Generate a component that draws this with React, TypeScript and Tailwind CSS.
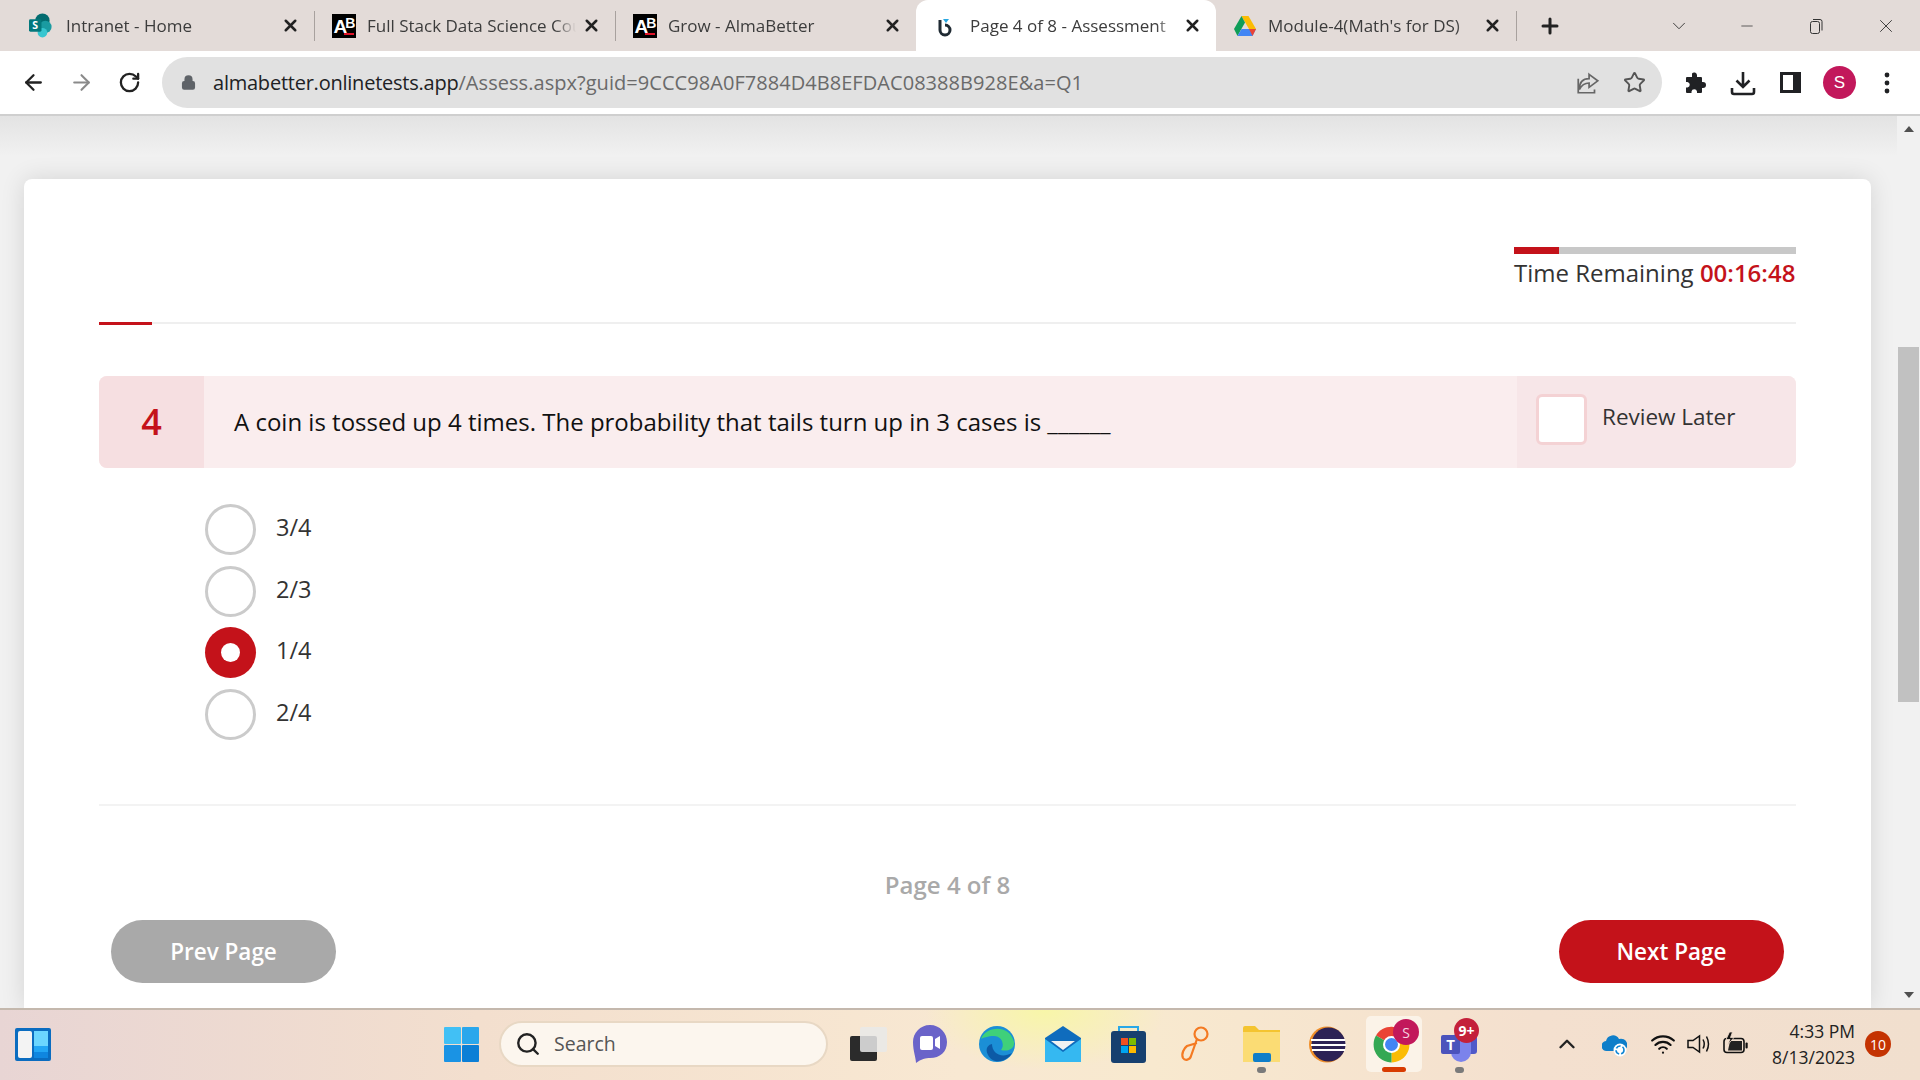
import { ReactNode } from 'react';
import { ArrowLeft, ArrowRight, RotateCw, Lock, Star, Plus, X, ChevronDown, ChevronUp, Minus, Search, Wifi } from 'lucide-react';

const SharePointIcon = () => (
  <svg width="25" height="25" viewBox="0 0 25 25">
    <circle cx="14" cy="7.5" r="7.5" fill="#036c70" />
    <circle cx="17" cy="14" r="6.5" fill="#1a9ba1" />
    <circle cx="14" cy="20" r="5" fill="#37c6d0" />
    <rect x="0" y="6" width="13" height="13" rx="1.5" fill="#03787c" />
    <text x="6.5" y="16.5" fontSize="11" fontWeight="700" fill="#fff" textAnchor="middle" fontFamily="Open Sans">S</text>
  </svg>
);

const AbIcon = () => (
  <div className="w-6 h-6 ml-[3px] shrink-0 bg-black relative flex items-start pl-[2px] font-['Liberation_Sans',sans-serif] font-bold text-white">
    <span className="text-[19px] leading-[25px]">A</span>
    <span className="text-[14px] leading-[15px] -ml-[2px] mt-[2px]">B</span>
    <div className="absolute right-[2px] bottom-[3px] w-[10px] h-[2px] bg-[#e0142a]" />
  </div>
);

const BingIcon = () => (
  <svg width="24" height="24" viewBox="0 0 24 24">
    <path d="M7 6 V16 a5 5 0 1 0 5-5" fill="none" stroke="#1f2a33" strokeWidth="3" />
    <path d="M10 5 l6 0 -3 4 z" fill="#2aa7e0" />
  </svg>
);

const DriveIcon = () => (
  <svg width="22" height="20" viewBox="0 0 22 20" className="ml-[4px] shrink-0">
    <path d="M7.5 0 H14.5 L22 13 H15 Z" fill="#fbbc04" />
    <path d="M7.5 0 L0 13 L3.5 20 L11 6.5 Z" fill="#0f9d58" />
    <path d="M3.5 20 H18.5 L22 13 H7.5 Z" fill="#4285f4" />
    <path d="M15 13 H22 L18.5 20 Z" fill="#ea4335" />
  </svg>
);

const tabs = [
  { title: 'Intranet - Home', icon: <SharePointIcon /> },
  { title: 'Full Stack Data Science Course', icon: <AbIcon /> },
  { title: 'Grow - AlmaBetter', icon: <AbIcon /> },
  { title: 'Page 4 of 8 - Assessment', icon: <BingIcon />, active: true },
  { title: "Module-4(Math's for DS)", icon: <DriveIcon /> },
];

const Tab = ({ title, icon, active }: { title: string; icon: ReactNode; active?: boolean }) => (
  <div className={active ? 'w-[300px] h-[51px] shrink-0 flex items-center pl-[17px] pr-[14px] bg-white rounded-t-[12px]' : 'w-[300px] h-[51px] shrink-0 flex items-center pl-[15px] pr-[14px]'}>
    <div className="w-[24px] h-[25px] flex items-center justify-center shrink-0">{icon}</div>
    <div className="flex-1 ml-[13px] min-w-0 overflow-hidden whitespace-nowrap text-[17px] text-[#3c3c3c] [mask-image:linear-gradient(to_right,black_90%,transparent)]">{title}</div>
    <X size={19} strokeWidth={3.2} className="ml-[6px] shrink-0 text-[#222]" />
  </div>
);

const Sep = () => <div className="w-px h-[30px] shrink-0 bg-[#a8a19e]" />;

const TabStrip = () => (
  <div className="h-[51px] bg-[#e3dbd8] flex items-center pl-[14px] shrink-0">
    <Tab {...tabs[0]} />
    <Sep />
    <Tab {...tabs[1]} />
    <Sep />
    <Tab {...tabs[2]} />
    <Tab {...tabs[3]} />
    <Tab {...tabs[4]} />
    <Sep />
    <Plus size={24} strokeWidth={3} className="ml-[21px] text-[#222]" />
    <ChevronDown size={22} strokeWidth={1} className="ml-[106px] text-[#333]" />
    <Minus size={18} strokeWidth={1} className="ml-[48px] text-[#333]" />
    <svg width="16" height="16" viewBox="0 0 16 16" className="ml-[52px]" fill="none" stroke="#333">
      <rect x="2.5" y="3.5" width="9" height="12" rx="2" />
      <path d="M5 1.5 h7 a2 2 0 0 1 2 2 v9" />
    </svg>
    <X size={22} strokeWidth={1} className="ml-[51px] text-[#333]" />
  </div>
);

const Toolbar = () => (
  <div className="h-[65px] bg-white border-b-2 border-[#cfcfcf] flex items-center shrink-0 text-[#222]">
    <ArrowLeft size={25} strokeWidth={2.2} className="ml-[21px]" />
    <ArrowRight size={25} strokeWidth={2} className="ml-[23px] text-[#8a8a8a]" />
    <RotateCw size={23} strokeWidth={2.4} className="ml-[24px]" />
    <div className="ml-[21px] w-[1500px] h-[51px] rounded-full bg-[#e1e1e1] flex items-center pl-[19px] pr-[16px]">
      <Lock size={15} strokeWidth={3} className="text-[#5f6368] fill-[#5f6368]" />
      <div className="ml-[17px] text-[20px] whitespace-nowrap text-[#6a6a6a] tracking-[0.05px]">
        <span className="text-[#202124] tracking-[-0.23px]">almabetter.onlinetests.app</span>/Assess.aspx?guid=9CCC98A0F7884D4B8EFDAC08388B928E&amp;a=Q1
      </div>
      <svg width="26" height="26" viewBox="0 0 24 24" className="ml-auto" fill="none" stroke="#666" strokeWidth="1.6">
        <path d="M13 4 l8 6 -8 6 v-4 c-4 0 -7 2 -9 6 c0 -6 3 -10 9 -10 z" />
        <path d="M3 8 v13 h15 v-3" />
      </svg>
      <Star size={23} strokeWidth={2} className="ml-[22px] text-[#555]" />
    </div>
    <svg width="22" height="22" viewBox="0 0 22 22" className="ml-[22px]" fill="#202124">
      <path d="M8 1.5 a2.8 2.8 0 0 1 5 1.5 V5 h4 a1 1 0 0 1 1 1 v4 h1 a3 3 0 0 1 0 6 h-1 v4 a1 1 0 0 1 -1 1 h-4 v-1.5 a2.8 2.8 0 0 0 -5.5 0 V21 H3 a1 1 0 0 1 -1 -1 v-4.5 h1.5 a2.8 2.8 0 0 0 0 -5.5 H2 V6 a1 1 0 0 1 1 -1 h5 V3 z" />
    </svg>
    <svg width="26" height="26" viewBox="0 0 26 26" className="ml-[24px]" fill="none" stroke="#202124" strokeWidth="2.6">
      <path d="M13 2 V17 M6.5 10.5 L13 17 L19.5 10.5" />
      <path d="M2 18 V22 Q2 24 4 24 H22 Q24 24 24 22 V18" />
    </svg>
    <div className="ml-[24px] w-[21px] h-[21px] border-[3px] border-[#202124] border-r-[8px]" />
    <div className="ml-[22px] w-[33px] h-[33px] rounded-full bg-[#c2185b] text-white text-[17px] font-['Liberation_Sans',sans-serif] flex items-center justify-center">S</div>
    <svg width="6" height="22" viewBox="0 0 6 22" className="ml-[28px]" fill="#202124">
      <circle cx="3" cy="3" r="2.4" />
      <circle cx="3" cy="11" r="2.4" />
      <circle cx="3" cy="19" r="2.4" />
    </svg>
  </div>
);

const options = [
  { label: '3/4' },
  { label: '2/3' },
  { label: '1/4', selected: true },
  { label: '2/4' },
];

const Radio = ({ label, selected }: { label: string; selected?: boolean }) => (
  <div className="h-[51px] flex items-start">
    {selected ? (
      <div className="w-[51px] h-[51px] rounded-full bg-[#c4121a] flex items-center justify-center">
        <div className="w-[19px] h-[19px] rounded-full bg-white" />
      </div>
    ) : (
      <div className="w-[51px] h-[51px] rounded-full border-[3px] border-[#cbcbcb]" />
    )}
    <div className="ml-[20px] text-[23.5px] leading-[46px] text-[#333]">{label}</div>
  </div>
);

const Card = () => (
  <div className="w-[1847px] h-[829px] mt-[63px] ml-[24px] bg-white rounded-t-[8px] shadow-[0_0_24px_rgba(0,0,0,0.12)] px-[75px] overflow-hidden">
    <div className="h-[145px] border-b-2 border-[#efefef] relative flex flex-col items-end">
      <div className="w-[282px] h-[7px] mt-[68px] bg-[#c8c8c8]">
        <div className="w-[45px] h-[7px] bg-[#c4121a]" />
      </div>
      <div className="w-[282px] mt-[1px] text-[24px] leading-[36px] whitespace-nowrap text-[#333]">
        Time Remaining <span className="text-[#c4121a] font-semibold">00:16:48</span>
      </div>
      <div className="absolute left-0 -bottom-[3px] w-[53px] h-[3px] bg-[#c4121a]" />
    </div>
    <div className="mt-[52px] h-[92px] flex rounded-[8px] overflow-hidden bg-[#faedee]">
      <div className="w-[105px] bg-[#f6dfe1] flex items-center justify-center text-[36px] font-semibold text-[#c4121a]">4</div>
      <div className="flex-1 pl-[30px] flex items-center text-[24px] text-[#111]">
        A coin is tossed up 4 times. The probability that tails turn up in 3 cases is ______
      </div>
      <div className="w-[279px] bg-[#f7e6e8] pl-[19px] pt-[18px] flex items-start">
        <div className="w-[51px] h-[51px] rounded-[6px] bg-white border-[3px] border-[#f4d2d4]" />
        <div className="ml-[15px] text-[22.5px] leading-[46px] text-[#333]">Review Later</div>
      </div>
    </div>
    <div className="mt-[36px] ml-[106px] flex flex-col gap-[10.7px]">
      {options.map((o) => (
        <Radio key={o.label} {...o} />
      ))}
    </div>
    <div className="mt-[64px] border-t-2 border-[#f3f3f3]" />
    <div className="mt-[61px] text-center text-[24px] leading-[36px] font-semibold text-[#a9a9a9]">Page 4 of 8</div>
    <div className="mt-[17px] px-[12px] flex justify-between">
      <button className="w-[225px] h-[63px] rounded-full bg-[#a9a9a9] text-white text-[22.5px] font-semibold">Prev Page</button>
      <button className="w-[225px] h-[63px] rounded-full bg-[#c4121a] text-white text-[22.5px] font-semibold">Next Page</button>
    </div>
  </div>
);

const Scrollbar = () => (
  <div className="w-[23px] ml-[26px] bg-[#f1f1f1] flex flex-col items-center shrink-0">
    <div className="mt-[10px] w-0 h-0 border-x-[5px] border-x-transparent border-b-[6px] border-b-[#505050]" />
    <div className="mt-[215px] w-[21px] h-[355px] bg-[#c1c1c1]" />
    <div className="mt-auto mb-[10px] w-0 h-0 border-x-[5px] border-x-transparent border-t-[6px] border-t-[#505050]" />
  </div>
);

const WidgetsIcon = () => (
  <div className="w-[36px] h-[33px] bg-[#0a6cc0] p-[3px] flex gap-[2px] rounded-[2px]">
    <div className="w-[14px] bg-[#f3f3f3] rounded-[2px]" />
    <div className="flex-1 flex flex-col">
      <div className="flex-1 bg-[#6bd6ff]" />
      <div className="h-[6px] bg-[#22a6f5]" />
      <div className="h-[6px] bg-[#0f86e0]" />
    </div>
  </div>
);

const WindowsIcon = () => (
  <svg width="35" height="35" viewBox="0 0 35 35">
    <rect x="0" y="0" width="17" height="17" rx="1" fill="#41c0f5" />
    <rect x="18" y="0" width="17" height="17" rx="1" fill="#2aa7ec" />
    <rect x="0" y="18" width="17" height="17" rx="1" fill="#1a93e4" />
    <rect x="18" y="18" width="17" height="17" rx="1" fill="#0c7fd6" />
  </svg>
);

const TaskViewIcon = () => (
  <svg width="37" height="34" viewBox="0 0 37 34">
    <rect x="0" y="9" width="27" height="25" rx="2" fill="#2b2b2b" />
    <rect x="10" y="0" width="27" height="25" rx="2" fill="#e9e9e9" fillOpacity="0.85" />
  </svg>
);

const ChatIcon = () => (
  <svg width="34" height="38" viewBox="0 0 34 38">
    <path d="M17 0 C27 0 34 8 34 17 C34 27 27 33 17 33 C13 33 8 34 3 38 C3 33 0 26 0 17 C0 8 7 0 17 0 Z" fill="#6a63c9" />
    <rect x="7" y="11" width="13" height="14" rx="2" fill="#fff" />
    <path d="M22 14 l5-3 v13 l-5-3 z" fill="#fff" />
  </svg>
);

const EdgeIcon = () => (
  <svg width="36" height="38" viewBox="0 0 36 38">
    <circle cx="18" cy="19" r="18" fill="#1b8fd6" />
    <path d="M2 14 C6 2 30 -2 35 17 C36 24 28 27 22 25 C26 20 23 11 15 11 C9 11 4 13 2 14 Z" fill="#3fd07a" />
    <path d="M13 19 C13 28 22 34 33 28 C28 37 14 40 9 30 C6 25 8 20 13 19 Z" fill="#0c5aa6" />
  </svg>
);

const MailIcon = () => (
  <svg width="36" height="36" viewBox="0 0 36 36">
    <path d="M0 12 L18 0 L36 12 V36 H0 Z" fill="#0f6cbd" />
    <path d="M0 13 L18 26 L36 13 V36 H0 Z" fill="#35b8f1" />
    <path d="M6 15 H30 L18 24 Z" fill="#f2f2f2" />
  </svg>
);

const StoreIcon = () => (
  <svg width="35" height="37" viewBox="0 0 35 37">
    <path d="M8 6 V1 H27 V6" fill="none" stroke="#29a8e8" strokeWidth="2" />
    <rect x="0" y="5" width="35" height="32" rx="3" fill="#17406f" />
    <rect x="10" y="12" width="7" height="7" fill="#f25022" />
    <rect x="18" y="12" width="7" height="7" fill="#7fba00" />
    <rect x="10" y="20" width="7" height="7" fill="#00a4ef" />
    <rect x="18" y="20" width="7" height="7" fill="#ffb900" />
  </svg>
);

const SquiggleIcon = () => (
  <svg width="30" height="36" viewBox="0 0 30 36" fill="none" stroke="#f47a22" strokeWidth="2.2">
    <circle cx="22" cy="8" r="6.5" />
    <path d="M18 13 L12 30 C11 34 6 35 4 32 C2 28 5 22 8 20 L18 17" />
  </svg>
);

const FolderIcon = () => (
  <svg width="37" height="36" viewBox="0 0 37 36">
    <path d="M0 2 Q0 0 2 0 H12 L16 4 H37 V36 H0 Z" fill="#f4c430" />
    <path d="M0 6 H37 V36 H0 Z" fill="#fbdc74" />
    <rect x="10" y="27" width="18" height="9" rx="2" fill="#0f7ec9" />
  </svg>
);

const EclipseIcon = () => (
  <svg width="37" height="37" viewBox="0 0 37 37">
    <circle cx="18" cy="18.5" r="18" fill="#f08f2a" />
    <circle cx="19.5" cy="18.5" r="17" fill="#2c2255" />
    <path d="M2 14 H36 M2 19 H37 M3 24 H36" stroke="#fff" strokeWidth="2" />
  </svg>
);

const ChromeIcon = () => (
  <svg width="37" height="37" viewBox="0 0 37 37">
    <path d="M18.5 18.5 L3 9.5 A18 18 0 0 1 34 9.5 Z" fill="#ea4335" />
    <path d="M18.5 18.5 L34 9.5 A18 18 0 0 1 18.5 36.5 Z" fill="#fbbc04" />
    <path d="M18.5 18.5 L18.5 36.5 A18 18 0 0 1 3 9.5 Z" fill="#34a853" />
    <circle cx="18.5" cy="18.5" r="8.5" fill="#fff" />
    <circle cx="18.5" cy="18.5" r="6.5" fill="#4285f4" />
  </svg>
);

const TeamsIcon = () => (
  <svg width="36" height="36" viewBox="0 0 36 36">
    <rect x="17" y="8" width="19" height="20" rx="3" fill="#5059c9" />
    <rect x="10" y="6" width="20" height="30" rx="10" fill="#7b83eb" />
    <rect x="0" y="9" width="19" height="19" rx="2" fill="#4b53bc" />
    <text x="9.5" y="24" fontSize="15" fontWeight="700" fill="#fff" textAnchor="middle" fontFamily="Open Sans">T</text>
  </svg>
);

const OneDriveIcon = () => (
  <svg width="25" height="26" viewBox="0 0 25 26">
    <path d="M5 20 a5 5 0 0 1 -1-10 a7 7 0 0 1 13-2 a5 5 0 0 1 4 12 z" fill="#0f7ec9" />
    <circle cx="18" cy="19" r="6.5" fill="#fff" />
    <circle cx="18" cy="19" r="4" fill="none" stroke="#1186d4" strokeWidth="1.6" strokeDasharray="5 2" />
  </svg>
);

const SpeakerIcon = () => (
  <svg width="25" height="24" viewBox="0 0 25 24" fill="none" stroke="#111" strokeWidth="1.5">
    <path d="M1 8.5 H6 L12.5 4 V20 L6 15.5 H1 Z" />
    <path d="M16 7.5 Q18.5 12 16 16.5" />
    <path d="M19.5 4.5 Q23.5 12 19.5 19.5" />
  </svg>
);

const BatteryIcon = () => (
  <svg width="25" height="24" viewBox="0 0 25 24">
    <rect x="1" y="6.5" width="20" height="14" rx="3" fill="none" stroke="#111" strokeWidth="1.6" />
    <path d="M5 18.5 L7 9 H19 V18.5 Z" fill="#222" />
    <rect x="22.5" y="10.5" width="2.2" height="6" rx="1" fill="#111" />
    <path d="M6.5 0 L3 7.5 H7 L4.5 13 L11 5.5 H7.5 L9.5 0 Z" fill="#111" stroke="#f4e0cf" strokeWidth="0.8" />
  </svg>
);

const Taskbar = () => (
  <div className="h-[72px] shrink-0 border-t-2 border-[#c4b8ad] flex items-center pb-[2px] bg-[radial-gradient(ellipse_120px_60px_at_1045px_0px,#f8f6a8,transparent),linear-gradient(to_right,#e8d5d4,#f3dfce_25%,#f8e8d2_50%,#f8e9cf_60%,#f4e0cf_80%,#f1dfce)]">
    <div className="ml-[15px]">
      <WidgetsIcon />
    </div>
    <div className="ml-[393px]">
      <WindowsIcon />
    </div>
    <div className="ml-[20px] w-[329px] h-[46px] rounded-full bg-[#fcf6ee] border-2 border-[#e8d8c4] flex items-center pl-[14px] text-[19.5px] text-[#555]">
      <Search size={26} strokeWidth={2.2} className="text-[#222]" />
      <span className="ml-[13px]">Search</span>
    </div>
    <div className="ml-[22px]">
      <TaskViewIcon />
    </div>
    <div className="ml-[26px]">
      <ChatIcon />
    </div>
    <div className="ml-[32px]">
      <EdgeIcon />
    </div>
    <div className="ml-[30px]">
      <MailIcon />
    </div>
    <div className="ml-[30px]">
      <StoreIcon />
    </div>
    <div className="ml-[33px]">
      <SquiggleIcon />
    </div>
    <div className="ml-[34px] relative">
      <FolderIcon />
      <div className="absolute left-[14px] -bottom-[11px] w-[9px] h-[6px] rounded-full bg-[#7a7a7a]" />
    </div>
    <div className="ml-[29px]">
      <EclipseIcon />
    </div>
    <div className="ml-[20px] w-[56px] h-[56px] rounded-[5px] bg-[#fbf3e8] flex items-center justify-center pr-[6px] relative">
      <ChromeIcon />
      <div className="absolute right-[3px] top-[3px] w-[26px] h-[26px] rounded-full bg-[#c2185b] text-[#f5d5e0] text-[14px] flex items-center justify-center">S</div>
      <div className="absolute left-[16px] bottom-0 w-[24px] h-[5px] rounded-full bg-[#d83b01]" />
    </div>
    <div className="ml-[19px] relative">
      <TeamsIcon />
      <div className="absolute -right-[2px] -top-[8px] w-[25px] h-[25px] rounded-full bg-[#c4203a] text-white text-[14px] font-bold flex items-center justify-center">9+</div>
      <div className="absolute left-[14px] -bottom-[11px] w-[9px] h-[6px] rounded-full bg-[#7a7a7a]" />
    </div>
    <ChevronUp size={26} strokeWidth={2.2} className="ml-[77px] text-[#222]" />
    <div className="ml-[22px]">
      <OneDriveIcon />
    </div>
    <Wifi size={26} strokeWidth={2} className="ml-[23px] text-[#111]" />
    <div className="ml-[11px]">
      <SpeakerIcon />
    </div>
    <div className="ml-[11px]">
      <BatteryIcon />
    </div>
    <div className="w-[95px] ml-[12px] text-right text-[17.5px] leading-[26px] text-[#222]">
      <div>4:33 PM</div>
      <div>8/13/2023</div>
    </div>
    <div className="ml-[10px] w-[26px] h-[26px] rounded-full bg-[#c43302] text-white text-[14px] flex items-center justify-center">10</div>
  </div>
);

const App = () => {
  return (
    <div className="w-[1920px] h-[1080px] flex flex-col overflow-hidden font-['Open_Sans',sans-serif]">
      <TabStrip />
      <Toolbar />
      <div className="flex-1 min-h-0 flex bg-[linear-gradient(to_bottom,#e3e3e3,#f1f1f1_40px,#f1f1f1)] overflow-hidden">
        <Card />
        <Scrollbar />
      </div>
      <Taskbar />
    </div>
  );
};

export default App;
